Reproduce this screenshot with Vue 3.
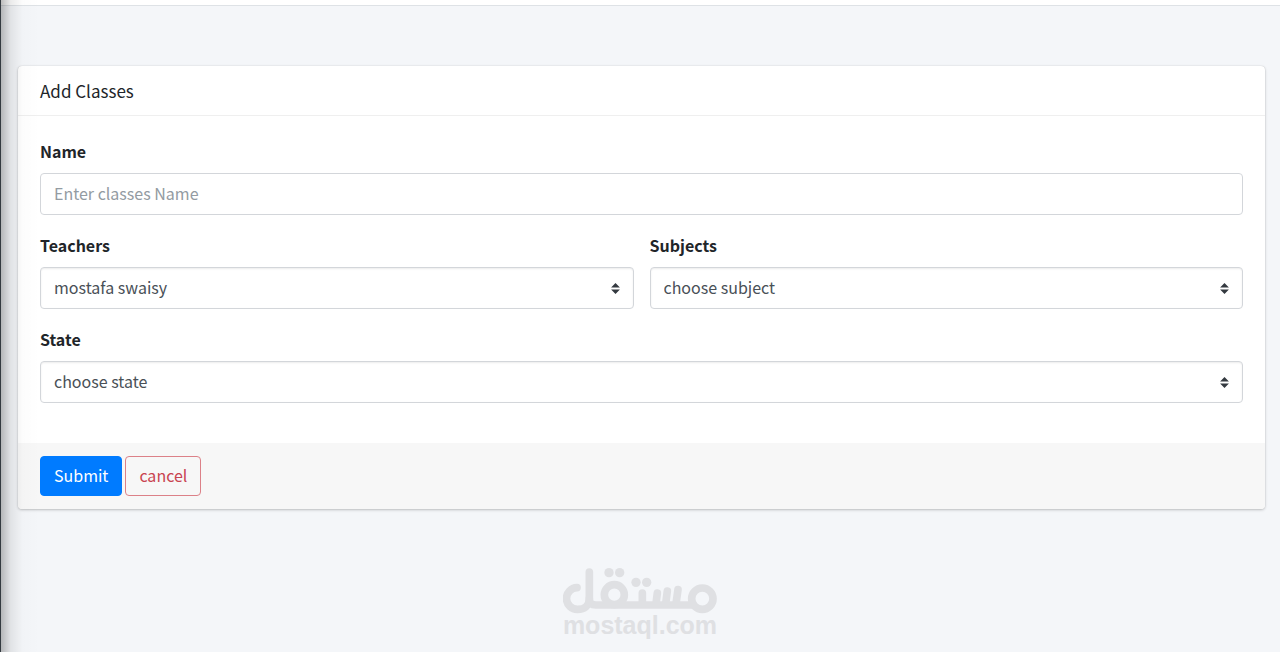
<script setup>
import { ref } from 'vue'

const name = ref('')
const teacher = ref('mostafa swaisy')
const subject = ref('choose subject')
const state = ref('choose state')
</script>

<template>
  <div class="page">
    <header class="topbar"></header>
    <main class="content">
      <form class="card" @submit.prevent>
        <h1 class="card-header">Add Classes</h1>
        <div class="card-body">
          <div class="field">
            <label for="name">Name</label>
            <input id="name" v-model="name" class="control" type="text" placeholder="Enter classes Name" />
          </div>
          <div class="row">
            <div class="field">
              <label for="teacher">Teachers</label>
              <div class="select">
                <select id="teacher" v-model="teacher" class="control">
                  <option>mostafa swaisy</option>
                </select>
                <svg class="caret" viewBox="0 0 8 10" aria-hidden="true"><path d="M4 0 0 4h8zM4 10 0 6h8z" /></svg>
              </div>
            </div>
            <div class="field">
              <label for="subject">Subjects</label>
              <div class="select">
                <select id="subject" v-model="subject" class="control">
                  <option>choose subject</option>
                </select>
                <svg class="caret" viewBox="0 0 8 10" aria-hidden="true"><path d="M4 0 0 4h8zM4 10 0 6h8z" /></svg>
              </div>
            </div>
          </div>
          <div class="field">
            <label for="state">State</label>
            <div class="select">
              <select id="state" v-model="state" class="control">
                <option>choose state</option>
              </select>
              <svg class="caret" viewBox="0 0 8 10" aria-hidden="true"><path d="M4 0 0 4h8zM4 10 0 6h8z" /></svg>
            </div>
          </div>
        </div>
        <footer class="card-footer">
          <button class="btn primary" type="submit">Submit</button>
          <button class="btn danger" type="button">cancel</button>
        </footer>
      </form>
    </main>
    <div class="edge"></div>
    <div class="brand">
      <svg class="mark" viewBox="69 39 462 138" aria-hidden="true">
        <g fill="none" stroke="#dfe0e3" stroke-width="23" stroke-linecap="round">
          <path d="M111 98a32.500 32.500 0 0 0 2 65c20 0 35-12 35-32V51" />
          <path d="M148 131c0 14 8 19 20 19H455" />
          <circle cx="223" cy="119" r="30" />
          <circle cx="487" cy="131" r="32" />
          <path d="M307 114v32M352 114l-4 32M382 108l-5 38M414 104l-6 42" />
        </g>
        <g fill="#dfe0e3">
          <circle cx="207" cy="53" r="14" />
          <circle cx="239" cy="53" r="14" />
          <circle cx="288" cy="82" r="14" />
          <circle cx="320" cy="82" r="14" />
        </g>
      </svg>
      <span class="brand-name">mostaql.com</span>
    </div>
  </div>
</template>

<style>
body {
  margin: 0;
  background: #f4f6f9;
}
</style>

<style scoped>
.page {
  position: relative;
  box-sizing: border-box;
  min-height: 100vh;
  background: #f4f6f9;
  color: #212529;
  font-family: "Noto Sans CJK SC", "Noto Sans", sans-serif;
  font-size: 16px;
  line-height: 24px;
}
.topbar {
  height: 5px;
  background: #fff;
  border-bottom: 1px solid #dee2e6;
}
.content {
  padding: 60px 15px 0 18px;
}
.card {
  overflow: hidden;
  background: #fff;
  border-radius: 4px;
  box-shadow: 0 0 1px rgba(0, 0, 0, 0.2), 0 1px 3px rgba(0, 0, 0, 0.22);
}
.card-header {
  margin: 0;
  padding: 12px 22px;
  border-bottom: 1px solid #efefef;
  font-size: 17px;
  font-weight: 400;
  line-height: 25px;
}
.card-body {
  display: flex;
  flex-direction: column;
  gap: 18px;
  padding: 23px 22px 40px;
}
.row {
  display: grid;
  grid-template-columns: 1fr 1fr;
  gap: 16px;
}
.field label {
  display: block;
  margin-bottom: 10px;
  font-weight: 700;
}
.control {
  display: block;
  box-sizing: border-box;
  width: 100%;
  height: 42px;
  padding: 0 13px 2px;
  border: 1px solid #d3d6da;
  border-radius: 4px;
  background: #fff;
  color: #495057;
  font: inherit;
  appearance: none;
}
.control::placeholder {
  color: #939ba2;
  opacity: 1;
}
.select {
  position: relative;
}
.select .control {
  box-shadow: inset 0 1px 2px rgba(0, 0, 0, 0.08);
}
.caret {
  position: absolute;
  top: 16px;
  right: 14px;
  width: 9px;
  height: 11px;
  fill: #343a40;
  pointer-events: none;
}
.card-footer {
  display: flex;
  gap: 3px;
  padding: 13px 22px;
  background: #f7f7f7;
}
.btn {
  height: 40px;
  padding: 0 13px 2px;
  border: 1px solid;
  border-radius: 4px;
  font: inherit;
}
.primary {
  border-color: #007bff;
  background: #007bff;
  color: #fff;
}
.danger {
  border-color: #dc8188;
  background: transparent;
  color: #c94450;
}
.edge {
  position: absolute;
  top: 0;
  bottom: 0;
  left: 0;
  width: 40px;
  box-sizing: border-box;
  border-left: 1px solid #343a40;
  background: linear-gradient(to right, rgba(0, 0, 0, 0.26), rgba(0, 0, 0, 0.08) 25%, rgba(0, 0, 0, 0.01) 55%, transparent);
  pointer-events: none;
}
.brand {
  display: flex;
  flex-direction: column;
  align-items: center;
  padding-top: 59px;
  color: #dfe0e3;
}
.mark {
  width: 154px;
  height: 46px;
}
.brand-name {
  font: 700 25px/22px "Liberation Sans", Arial, sans-serif;
}
</style>
